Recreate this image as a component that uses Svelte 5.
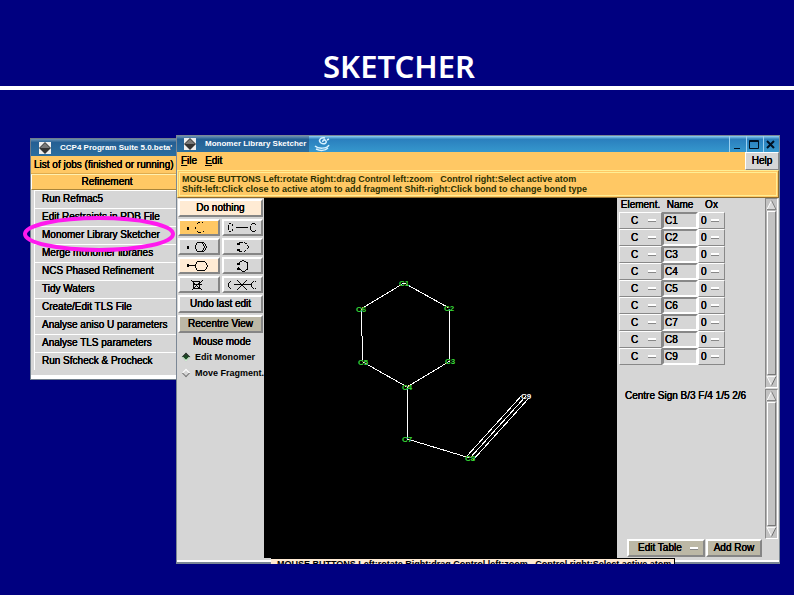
<script>
  const jobs = ['Run Refmac5', 'Edit Restraints in PDB File', 'Monomer Library Sketcher', 'Merge monomer libraries', 'NCS Phased Refinement', 'Tidy Waters', 'Create/Edit TLS File', 'Analyse aniso U parameters', 'Analyse TLS parameters', 'Run Sfcheck & Procheck'];
  const names = ['C1', 'C2', 'C3', 'C4', 'C5', 'C6', 'C7', 'C8', 'C9'];
  const atoms = [
    ['C1', 140, 85], ['C2', 185, 110], ['C3', 186, 163], ['C4', 143, 189], ['C5', 99, 164],
    ['C6', 97, 111], ['C7', 143, 241], ['C8', 206, 260], ['C9', 262, 198]
  ];
  // Icons use a 42 x 17 box, the outer size of a tool button.
  const tools = [
    { label: 'Add atom', tone: 'gold', d: 'M19 5l2-2h1M24 3l1 1M18 8v2M19 12l2 2h2M25 13l1-1', dot: [10, 9] },
    { label: 'Join fragments', tone: '', d: 'M7 4h2M10 5l1 2M7 6v5M7 13h2M10 12l1-2M14 9h12M33 4h-2l-2 2M29 7v4M29 11l2 2h2M34 5v1M34 11v1' },
    { label: 'Add ring', tone: '', d: 'M20 4h6l3 5-3 5h-6l-3-5zM25 5l2 4-2 4', dot: [10, 9] },
    { label: 'Add open ring', tone: '', d: 'M17 5l4-1M22 4l3 2M26 7l1 2-1 2M24 12l-2 2M20 14l-3-1', dots: [[15, 5], [15, 11]] },
    { label: 'Add linked ring', tone: 'cream', d: 'M11 8h6M20 4h7l3 5-3 5h-7l-3-5z', dot: [10, 8] },
    { label: 'Fuse ring', tone: '', d: 'M17 6l4-3 5 3v6l-4 3-5-3M17 6l-1 2M16 10l1 2', dots: [[15, 6], [15, 11]] },
    { label: 'Delete atom', tone: '', d: 'M13 4l11 10M25 4L14 14M16 5h6v8h-6zM15 9h9' },
    { label: 'Delete bond', tone: '', d: 'M9 5l-2 2v4l2 2M12 9h17M15 4l10 10M25 4L15 14M32 5l-2 2v4l2 2M34 5v1M34 12v1' }
  ];
  let mode = $state('edit');
</script>

{#snippet sysicon()}
  <svg class="sys" viewBox="0 0 12 12" aria-hidden="true"><rect width="12" height="12" fill="#eee" /><path d="M6 0l6 6-6 6-6-6z" fill="#333" /><path d="M6 1l5 5H1z" fill="#777" /></svg>
{/snippet}

{#snippet scrollbar()}
  <div class="scroll">
    <button aria-label="Scroll up"><svg viewBox="0 0 12 12"><path d="M6 1L1 11h10z" fill="#d8d8d8" /><path d="M6 1L1 11" stroke="#fff" /><path d="M6 1l5 10H1" stroke="#777" fill="none" /></svg></button>
    <div class="thumb"></div>
    <button aria-label="Scroll down"><svg viewBox="0 0 12 12"><path d="M1 1h10L6 11z" fill="#d8d8d8" /><path d="M6 11L1 1h10" stroke="#fff" fill="none" /><path d="M11 1L6 11" stroke="#666" /></svg></button>
  </div>
{/snippet}

<main class="slide">
  <h1>SKETCHER</h1>
  <div class="desktop">
    <section class="win back">
      <header class="bar">{@render sysicon()}<span>CCP4 Program Suite 5.0.beta'</span></header>
      <div class="list-title">List of jobs (finished or running)</div>
      <button class="category">Refinement</button>
      <ul>
        {#each jobs as job}
          <li><button>{job}</button></li>
        {/each}
      </ul>
    </section>

    <section class="win front">
      <header class="bar">
        <div class="caption">{@render sysicon()}<span>Monomer Library Sketcher</span></div>
        <svg class="swirl" viewBox="0 0 18 15" aria-hidden="true"><path d="M2 9c3 3 12 3 14-1M3 12c4 2 9 2 12-1M12 1c-5-1-7 3-4 5s6 0 5-2-4-1-3 1M14 3l2-1" fill="none" stroke="#d9f2ff" stroke-width="1.5" /></svg>
        <div class="controls">
          <button aria-label="Minimise"><svg viewBox="0 0 14 14"><path d="M4 11.5h6" stroke="#012" /></svg></button>
          <button aria-label="Maximise"><svg viewBox="0 0 14 14"><path d="M2.500 3.500h9v8h-9zM2 4.500h10" stroke="#012" fill="none" /></svg></button>
          <button aria-label="Close"><svg viewBox="0 0 14 14"><path d="M3 4l7 7M10 4l-7 7" stroke="#012" stroke-width="2" /></svg></button>
        </div>
      </header>
      <nav>
        <button><u>F</u>ile</button><button><u>E</u>dit</button><button class="help">Help</button>
      </nav>
      <div class="message"><p>MOUSE BUTTONS Left:rotate Right:drag Control left:zoom &nbsp; Control right:Select active atom</p><p>Shift-left:Click close to active atom to add fragment Shift-right:Click bond to change bond type</p></div>
      <div class="body">
        <aside class="tools">
          <button class="tool cream wide">Do nothing</button>
          {#each tools as t}
            <button class="tool {t.tone}" aria-label={t.label}>
              <svg viewBox="2 2 38 13"><path d={t.d} />{#if t.dot}<rect x={t.dot[0] - 1} y={t.dot[1] - 1} width="2" height="3" />{/if}{#each t.dots ?? [] as p}<rect x={p[0]} y={p[1]} width="3" height="2" />{/each}</svg>
            </button>
          {/each}
          <button class="tool wide">Undo last edit</button>
          <button class="tool khaki wide">Recentre View</button>
          <fieldset>
            <legend>Mouse mode</legend>
            <label><input type="radio" name="mode" value="edit" bind:group={mode} />Edit Monomer</label>
            <label><input type="radio" name="mode" value="move" bind:group={mode} />Move Fragment.</label>
          </fieldset>
        </aside>

        <div class="canvas">
          <svg viewBox="0 0 353 360" role="img" aria-label="Molecule">
            <path d="M140 85l45 25 1 53-43 26-44-25-2-53zM143 189v52l63 19M203 258l56-62M206 260l56-62M209 262l56-62" />
            {#each atoms as [n, x, y]}
              <text {x} y={y + 3} class:active={n === 'C9'}>{n}</text>
            {/each}
          </svg>
        </div>

        <aside class="side">
          <div class="pane atoms">
            <table>
              <thead><tr><th>Element.</th><th>Name</th><th>Ox</th></tr></thead>
              <tbody>
                {#each names as n}
                  <tr>
                    <td><select class="element" aria-label="{n} element"><option>C</option></select></td>
                    <td><input aria-label="{n} name" value={n} /></td>
                    <td><select class="ox" aria-label="{n} charge"><option>0</option></select></td>
                  </tr>
                {/each}
              </tbody>
            </table>
            {@render scrollbar()}
          </div>
          <div class="pane centres">
            <p>Centre Sign B/3 F/4 1/5 2/6</p>
            {@render scrollbar()}
          </div>
          <div class="actions">
            <select class="khaki" aria-label="Table action"><option>Edit Table</option></select>
            <button class="tool khaki">Add Row</button>
          </div>
        </aside>
      </div>
      <footer><div class="tip">MOUSE BUTTONS Left:rotate Right:drag Control left:zoom &nbsp; Control right:Select active atom</div></footer>
    </section>

    <svg class="ring" viewBox="0 0 154 38" aria-hidden="true"><ellipse cx="77" cy="19" rx="74" ry="16" /></svg>
  </div>
</main>

<style>
  :global(body) { margin: 0; background: #000080; }
  * { box-sizing: border-box; }
  .slide { min-height: 100vh; background: #000080; overflow: hidden; font: 10px/12px "Liberation Sans", Arial, sans-serif; color: #000; }
  h1 { margin: 0; height: 90px; padding: 46px 0 0 4px; border-bottom: 4px solid #fff; color: #fff; text-align: center; font: 600 31px/40px "Noto Sans", sans-serif; }
  .desktop { position: relative; height: 505px; }
  button, select, input { font: inherit; color: inherit; margin: 0; padding: 0; border-radius: 0; border: 0; text-shadow: inherit; }
  p, ul { margin: 0; padding: 0; list-style: none; }
  .win { position: absolute; background: #d6d6d6; text-shadow: 0 0 0 #000, 0 0 0 #000; white-space: nowrap; }
  .bar { display: flex; align-items: center; color: #fff; font-weight: 700; font-size: 8px; text-shadow: none; }
  .sys { width: 12px; height: 12px; flex: none; }

  .back { left: 30px; top: 48px; width: 150px; border: 1px solid #6e7c8c; overflow: hidden; }
  .back .bar { height: 17px; padding-left: 8px; gap: 9px; background: linear-gradient(#6d93b5, #245f94 20%, #2c6f9f); }
  .list-title { height: 18px; padding: 3px; background: #ffc864; border-bottom: 1px solid #e0ac4e; }
  .category { display: block; width: 100%; height: 16px; padding-left: 4px; background: #ffc864; border: 1px solid; border-color: #fff0b0 #fff #a8843a #fff; line-height: 12px; }
  ul { padding: 0 0 5px 3px; border-bottom: 4px solid #fff; }
  li button { display: block; width: 100%; height: 18px; padding: 0 0 1px 7px; text-align: left; background: #d6d6d6; border-left: 1px solid #fff; border-top: 1px solid #fff; }

  .front { left: 176px; right: 14px; top: 45px; border: 1px solid #7b8795; border-width: 1px 1px 2px; }
  .front .bar { height: 16px; background: linear-gradient(#8fd0f5, #2a7fbe 20%, #3698cd); }
  .caption { display: flex; align-items: center; gap: 9px; width: 132px; height: 16px; padding-left: 7px; background: linear-gradient(#6d93b5, #245f94 20%, #2c6f9f); }
  .swirl { width: 18px; height: 15px; margin-left: 4px; }
  .controls { display: flex; margin-left: auto; gap: 1px; }
  .controls button { width: 16px; height: 16px; background: transparent; border-left: 1px solid #9bd0f0; }
  .controls svg { display: block; width: 14px; height: 14px; }
  nav { display: flex; height: 18px; background: #ffc864; }
  nav button { padding: 0 4px; background: none; }
  nav .help { margin-left: auto; width: 34px; background: #d6d6d6; border: 1px solid; border-color: #fff #888 #888 #fff; }
  .message { height: 28px; padding: 3px 4px 0; background: #ffc864; border: 1px solid; border-color: #ffee94 #8b6c30 #8b6c30 #ffee94; outline: 1px solid #ffee94; outline-offset: -3px; line-height: 10px; color: #2a3000; font-size: 9px; font-weight: 700; text-shadow: none; }
  .body { display: flex; min-height: 360px; }
  .tools { width: 87px; padding: 1px; display: grid; grid-template-columns: 1fr 1fr; grid-template-rows: 18px repeat(4, 17px) 18px 18px; gap: 2px; align-content: start; flex: none; }
  .tool { background: #d6d6d6; border: 2px solid; border-color: #fff #858585 #858585 #fff; }
  .tool svg { display: block; width: 100%; height: 100%; fill: none; stroke: #000; shape-rendering: crispEdges; }
  .tool rect { fill: #000; stroke: none; }
  .wide { grid-column: 1 / -1; }
  .cream { background: #ffebd4; }
  .gold { background: #ffc864; }
  .khaki { background-color: #bcb8a6; }
  fieldset { grid-column: 1 / -1; border: 0; margin: 0; padding: 0; min-width: 0; }
  legend { padding: 1px 0 2px 15px; height: 14px; }
  label { display: flex; align-items: center; height: 16px; gap: 6px; padding-left: 5px; font-size: 9px; font-weight: 700; text-shadow: none; }
  input[type='radio'] { appearance: none; flex: none; width: 6px; height: 6px; background: #d6d6d6; border: 1px solid; border-color: #fff #777 #777 #fff; rotate: 45deg; }
  input[type='radio']:checked { background: #1b4a24; border-color: #333 #e6ffe6 #e6ffe6 #333; }
  .canvas { flex: 1; background: #000; min-width: 0; }
  .canvas svg { display: block; width: 100%; height: 360px; fill: none; stroke: #fff; shape-rendering: crispEdges; }
  .canvas text { fill: #38dc38; stroke: none; font-size: 8px; font-weight: 700; text-anchor: middle; }
  .canvas .active { fill: #fff; }
  .side { width: 162px; flex: none; display: flex; flex-direction: column; }
  .pane { display: flex; justify-content: space-between; padding-right: 1px; }
  .atoms { height: 190px; }
  .centres { height: 150px; margin-top: 1px; }
  .centres p { padding: 1px 0 0 8px; }
  table { border-collapse: collapse; margin-left: 2px; height: 167px; }
  th { font-weight: 400; height: 14px; padding: 0; text-align: center; }
  td { padding: 0; height: 17px; }
  td select, td input { display: block; height: 17px; }
  select { appearance: none; border: 1px solid; border-color: #fff #888 #888 #fff; background: #d6d6d6 linear-gradient(#fff 2px, #888 2px) no-repeat right 5px center / 8px 3px; }
  .element { width: 43px; padding-left: 11px; }
  .ox { width: 27px; padding-left: 2px; }
  td input { width: 36px; padding-left: 1px; background: #d6d6d6; border: 2px solid; border-color: #888 #fff #fff #888; }
  .scroll { width: 13px; height: 100%; display: flex; flex-direction: column; background: #b2b2b2; border: 1px solid; border-color: #888 #fff #fff #888; }
  .scroll button { height: 12px; background: #c2c2c2; flex: none; }
  .scroll svg { display: block; width: 11px; height: 12px; }
  .thumb { flex: 1; background: #c3c3c3; border: 1px solid; border-color: #fff #777 #777 #fff; margin: 0 1px; }
  .actions { display: flex; gap: 1px; padding: 0 0 0 10px; }
  .actions select { width: 78px; height: 18px; padding-left: 9px; border-width: 2px; background-color: #bcb8a6; }
  .actions button { width: 56px; height: 18px; }
  footer { height: 4px; padding-left: 94px; border-bottom: 2px solid #fff; }
  .tip { position: relative; width: 404px; max-width: 100%; height: 6px; overflow: hidden; padding-left: 6px; background: #ffebd4; border: solid #000; border-width: 1px 1px 0 0; font-size: 9px; font-weight: 700; line-height: 10px; text-shadow: none; }
  .ring { position: absolute; left: 22px; top: 125px; width: 154px; height: 38px; fill: none; stroke: #ff19ee; stroke-width: 4; pointer-events: none; }
</style>
